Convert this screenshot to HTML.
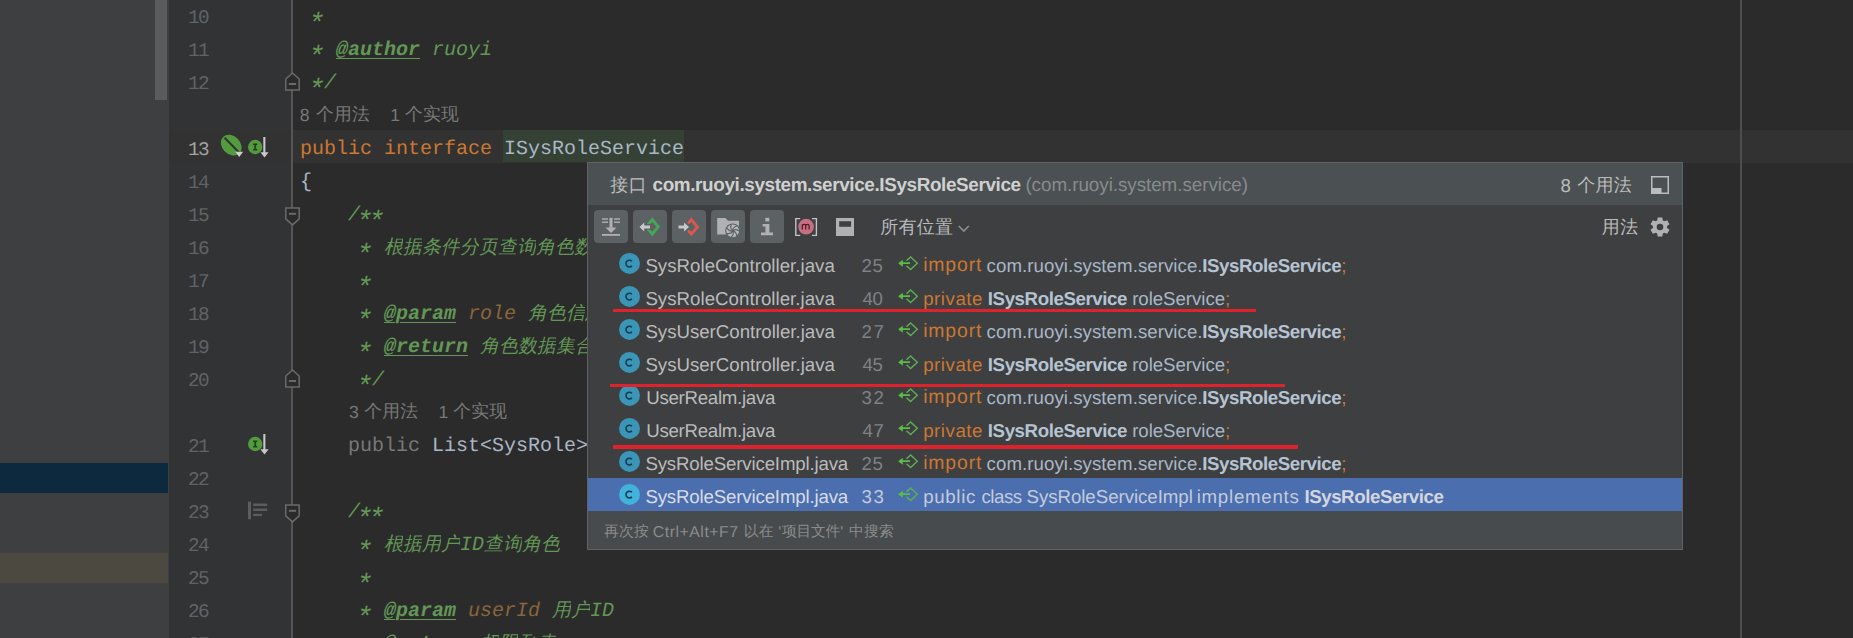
<!DOCTYPE html><html><head><meta charset="utf-8"><title>usages</title><style>
*{box-sizing:border-box}
html,body{margin:0;padding:0;background:#2b2b2b;}
body{width:1853px;height:638px;overflow:hidden;position:relative;font-family:"Liberation Sans", sans-serif;text-rendering:geometricPrecision;}
.abs{position:absolute}
#left{left:0;top:0;width:169px;height:638px;background:#3d3f41}
#thumb{left:155px;top:0;width:12px;height:100px;background:#595b5d}
#bar1{left:0;top:463px;width:168px;height:30px;background:#0d293e}
#bar2{left:0;top:553px;width:168px;height:30px;background:#4c4a40}
#gutter{left:169px;top:0;width:122px;height:638px;background:#313335}
#foldline{left:291px;top:0;width:2px;height:638px;background:#555555}
#curline{left:293px;top:130px;width:1560px;height:33px;background:#323232}
#curgut{left:169px;top:130px;width:122px;height:33px;background:#323232}
#margin{left:1740px;top:0;width:2px;height:638px;background:#4d4d4d}
#identbg{left:503px;top:130px;width:181px;height:32px;background:#344134}
.ln{position:absolute;left:188px;width:30px;text-align:left;font-family:"Liberation Mono", monospace;font-size:19.4px;letter-spacing:-1.7px;line-height:33px;height:33px;color:#606366;white-space:pre}
.ln.cur{color:#a4a3a3}
.code{position:absolute;left:300px;font-family:"Liberation Mono", monospace;font-size:20px;line-height:33px;height:33px;white-space:pre;color:#a9b7c6}
.doc{color:#629755;font-style:italic}
.tag{color:#629755;font-style:italic;font-weight:bold;text-decoration:underline;text-decoration-thickness:1px;text-underline-offset:3px}
.st{display:inline-block;width:12px;height:0;line-height:0;font-size:28px;text-indent:-4.2px;position:relative;top:9.6px;white-space:nowrap;overflow:visible;vertical-align:baseline}
.prm{color:#8a653b;font-style:italic}
.kw{color:#cc7832}
.dim{color:#787878}
.cjk{display:inline-block;overflow:hidden;vertical-align:top;height:33px;font-size:19px;white-space:nowrap}
.k{display:inline-block;text-align:center;font-style:inherit;overflow:hidden;vertical-align:top;height:33px}
.inlay{position:absolute;font-family:"Liberation Sans", sans-serif;font-size:17px;line-height:33px;height:33px;color:#787878;white-space:pre}
#popup{left:587px;top:162px;width:1096px;height:388px;background:#3d3f41;border:1px solid #606365;overflow:hidden}
#phead{left:0;top:0;width:1094px;height:42px;background:#4b5052}
#pfoot{left:0;top:348px;width:1094px;height:38px;background:#474b4d}
#psel{left:0;top:315px;width:1094px;height:33px;background:#4b6eaf}
.tb{position:absolute;top:47px;width:34px;height:33px;background:#5c6164;border-radius:4px}
.t{position:absolute;white-space:pre;line-height:33px;height:33px;font-size:18.7px}
.fn{color:#bbbbbb}
.num{color:#7e8285}
.cd{color:#a9b7c6}
.b{font-weight:bold}
.red{position:absolute;height:3px;background:#df232c}
svg{position:absolute;overflow:visible}
</style></head><body><div id="left" class="abs"></div><div id="thumb" class="abs"></div><div id="bar1" class="abs"></div><div id="bar2" class="abs"></div>
<div id="gutter" class="abs"></div><div id="curgut" class="abs"></div><div id="foldline" class="abs"></div>
<div id="curline" class="abs"></div><div id="identbg" class="abs"></div><div id="margin" class="abs"></div>
<div class="ln" style="top:2px">10</div>
<div class="ln" style="top:35px">11</div>
<div class="ln" style="top:68px">12</div>
<div class="ln cur" style="top:134px">13</div>
<div class="ln" style="top:167px">14</div>
<div class="ln" style="top:200px">15</div>
<div class="ln" style="top:233px">16</div>
<div class="ln" style="top:266px">17</div>
<div class="ln" style="top:299px">18</div>
<div class="ln" style="top:332px">19</div>
<div class="ln" style="top:365px">20</div>
<div class="ln" style="top:431px">21</div>
<div class="ln" style="top:464px">22</div>
<div class="ln" style="top:497px">23</div>
<div class="ln" style="top:530px">24</div>
<div class="ln" style="top:563px">25</div>
<div class="ln" style="top:596px">26</div>
<div class="ln" style="top:629px">27</div>
<div class="code" style="top:1px"><span class="doc"> <span class="st">*</span></span></div>
<div class="code" style="top:34px"><span class="doc"> <span class="st">*</span> </span><span class="tag">@author</span><span class="doc"> ruoyi</span></div>
<div class="code" style="top:67px"><span class="doc"> <span class="st">*</span>/</span></div>
<div class="code" style="top:133px"><span class="kw">public interface </span>ISysRoleService</div>
<div class="code" style="top:166px">{</div>
<div class="code" style="top:199px"><span class="doc">    /<span class="st">*</span><span class="st">*</span></span></div>
<div class="code" style="top:232px"><span class="doc">     <span class="st">*</span> <span class="cjk" style="width:228px"><i class="k" style="width:19px">根</i><i class="k" style="width:19px">据</i><i class="k" style="width:19px">条</i><i class="k" style="width:19px">件</i><i class="k" style="width:19px">分</i><i class="k" style="width:19px">页</i><i class="k" style="width:19px">查</i><i class="k" style="width:19px">询</i><i class="k" style="width:19px">角</i><i class="k" style="width:19px">色</i><i class="k" style="width:19px">数</i><i class="k" style="width:19px">据</i></span></span></div>
<div class="code" style="top:265px"><span class="doc">     <span class="st">*</span></span></div>
<div class="code" style="top:298px"><span class="doc">     <span class="st">*</span> </span><span class="tag">@param</span><span class="doc"> </span><span class="prm">role</span><span class="doc"> <span class="cjk" style="width:76px"><i class="k" style="width:19px">角</i><i class="k" style="width:19px">色</i><i class="k" style="width:19px">信</i><i class="k" style="width:19px">息</i></span></span></div>
<div class="code" style="top:331px"><span class="doc">     <span class="st">*</span> </span><span class="tag">@return</span><span class="doc"> <span class="cjk" style="width:152px"><i class="k" style="width:19px">角</i><i class="k" style="width:19px">色</i><i class="k" style="width:19px">数</i><i class="k" style="width:19px">据</i><i class="k" style="width:19px">集</i><i class="k" style="width:19px">合</i><i class="k" style="width:19px">信</i><i class="k" style="width:19px">息</i></span></span></div>
<div class="code" style="top:364px"><span class="doc">     <span class="st">*</span>/</span></div>
<div class="code" style="top:430px">    <span class="dim">public</span> List&lt;SysRole&gt; selectRoleList(SysRole role);</div>
<div class="code" style="top:496px"><span class="doc">    /<span class="st">*</span><span class="st">*</span></span></div>
<div class="code" style="top:529px"><span class="doc">     <span class="st">*</span> <span class="cjk" style="width:76px"><i class="k" style="width:19px">根</i><i class="k" style="width:19px">据</i><i class="k" style="width:19px">用</i><i class="k" style="width:19px">户</i></span>ID<span class="cjk" style="width:76px"><i class="k" style="width:19px">查</i><i class="k" style="width:19px">询</i><i class="k" style="width:19px">角</i><i class="k" style="width:19px">色</i></span></span></div>
<div class="code" style="top:562px"><span class="doc">     <span class="st">*</span></span></div>
<div class="code" style="top:595px"><span class="doc">     <span class="st">*</span> </span><span class="tag">@param</span><span class="doc"> </span><span class="prm">userId</span><span class="doc"> <span class="cjk" style="width:38px"><i class="k" style="width:19px">用</i><i class="k" style="width:19px">户</i></span>ID</span></div>
<div class="code" style="top:628px"><span class="doc">     <span class="st">*</span> </span><span class="tag">@return</span><span class="doc"> <span class="cjk" style="width:76px"><i class="k" style="width:19px">权</i><i class="k" style="width:19px">限</i><i class="k" style="width:19px">列</i><i class="k" style="width:19px">表</i></span></span></div>
<div class="t" style="left:299.80px;top:98.5px;font-size:17.6px;color:#787878;font-weight:normal;font-style:normal;letter-spacing:0.000px;">8</div>
<div class="inlay" style="left:316px;top:98px;width:54px;overflow:hidden;font-size:17.8px"><i class="k" style="width:18px">个</i><i class="k" style="width:18px">用</i><i class="k" style="width:18px">法</i></div>
<div class="t" style="left:390.20px;top:98.5px;font-size:17.6px;color:#787878;font-weight:normal;font-style:normal;letter-spacing:0.000px;">1</div>
<div class="inlay" style="left:405px;top:98px;width:54px;overflow:hidden;font-size:17.8px"><i class="k" style="width:18px">个</i><i class="k" style="width:18px">实</i><i class="k" style="width:18px">现</i></div>
<div class="t" style="left:349.00px;top:395.5px;font-size:17.6px;color:#787878;font-weight:normal;font-style:normal;letter-spacing:0.000px;">3</div>
<div class="inlay" style="left:364.2px;top:395px;width:54px;overflow:hidden;font-size:17.8px"><i class="k" style="width:18px">个</i><i class="k" style="width:18px">用</i><i class="k" style="width:18px">法</i></div>
<div class="t" style="left:438.40px;top:395.5px;font-size:17.6px;color:#787878;font-weight:normal;font-style:normal;letter-spacing:0.000px;">1</div>
<div class="inlay" style="left:453.2px;top:395px;width:54px;overflow:hidden;font-size:17.8px"><i class="k" style="width:18px">个</i><i class="k" style="width:18px">实</i><i class="k" style="width:18px">现</i></div>
<svg style="left:248px;top:132px" width="22" height="26" viewBox="0 0 22 26">
<circle cx="7.2" cy="15" r="7.2" fill="#549b40"/>
<path d="M5.1 11.6h4.2v1.4h-1.2v4h1.2v1.4h-4.2v-1.4h1.2v-4h-1.2z" fill="#24401c"/>
<rect x="15.3" y="5" width="2.1" height="16.5" fill="#c8c8c8"/>
<path d="M12.4 20.2h8.2l-4.1 5.3z" fill="#c8c8c8"/></svg>
<svg style="left:248px;top:429px" width="22" height="26" viewBox="0 0 22 26">
<circle cx="7.2" cy="15" r="7.2" fill="#549b40"/>
<path d="M5.1 11.6h4.2v1.4h-1.2v4h1.2v1.4h-4.2v-1.4h1.2v-4h-1.2z" fill="#24401c"/>
<rect x="15.3" y="5" width="2.1" height="16.5" fill="#c8c8c8"/>
<path d="M12.4 20.2h8.2l-4.1 5.3z" fill="#c8c8c8"/></svg>
<svg style="left:219px;top:133px" width="26" height="26" viewBox="0 0 26 26">
<ellipse cx="12.25" cy="12.15" rx="11.5" ry="9.1" transform="rotate(45 12.25 12.15)" fill="#549b40"/>
<path d="M5.6 4.7L20.3 19.7" stroke="#2e3630" stroke-width="2" fill="none"/>
<path d="M16.3 18.8h7.8l-3.9 5.3z" fill="#cfcfcf"/></svg>
<svg style="left:248px;top:501px" width="20" height="19" viewBox="0 0 20 19">
<rect x="0" y="0.6" width="3" height="17.6" fill="#5b5e61"/>
<rect x="5.2" y="2.5" width="14" height="2.5" fill="#5b5e61"/>
<rect x="5.2" y="7.5" width="14" height="2.5" fill="#5b5e61"/>
<rect x="5.2" y="12.8" width="8.8" height="2.3" fill="#5b5e61"/></svg>
<svg style="left:284px;top:72px" width="17" height="19" viewBox="0 0 17 19">
<path d="M1.8 17.9h13.4v-10.9l-6.7-6.1l-6.7 6.1z" fill="#2b2b2b" stroke="#6a6a6a" stroke-width="1.5"/>
<rect x="4.9" y="11" width="7.2" height="2" fill="#6a6a6a"/></svg>
<svg style="left:284px;top:207px" width="17" height="19" viewBox="0 0 17 19">
<path d="M1.8 0.9h13.4v10.9l-6.7 6.1l-6.7-6.1z" fill="#2b2b2b" stroke="#6a6a6a" stroke-width="1.5"/>
<rect x="4.9" y="5.8" width="7.2" height="2" fill="#6a6a6a"/></svg>
<svg style="left:284px;top:369px" width="17" height="19" viewBox="0 0 17 19">
<path d="M1.8 17.9h13.4v-10.9l-6.7-6.1l-6.7 6.1z" fill="#2b2b2b" stroke="#6a6a6a" stroke-width="1.5"/>
<rect x="4.9" y="11" width="7.2" height="2" fill="#6a6a6a"/></svg>
<svg style="left:284px;top:504px" width="17" height="19" viewBox="0 0 17 19">
<path d="M1.8 0.9h13.4v10.9l-6.7 6.1l-6.7-6.1z" fill="#2b2b2b" stroke="#6a6a6a" stroke-width="1.5"/>
<rect x="4.9" y="5.8" width="7.2" height="2" fill="#6a6a6a"/></svg>
<div id="popup" class="abs"><div id="phead" class="abs"></div><div id="psel" class="abs"></div><div id="pfoot" class="abs"></div><div class="t" style="left:22px;top:5.5px;width:37px;overflow:hidden;font-size:18px;color:#bbbbbb;"><i class="k" style="width:18.5px">接</i><i class="k" style="width:18.5px">口</i></div><div class="t" style="left:64.50px;top:5.5px;font-size:18.9px;color:#d0d0d0;font-weight:bold;font-style:normal;letter-spacing:-0.377px;">com.ruoyi.system.service.ISysRoleService</div><div class="t" style="left:437.40px;top:5.5px;font-size:18.9px;color:#878b8d;font-weight:normal;font-style:normal;letter-spacing:-0.080px;">(com.ruoyi.system.service)</div><div class="t" style="left:972.60px;top:5.5px;font-size:18.7px;color:#bbbbbb;font-weight:normal;font-style:normal;letter-spacing:0.000px;">8</div><div class="t" style="left:989px;top:5.5px;width:55px;overflow:hidden;font-size:18px;color:#bbbbbb;"><i class="k" style="width:18.33px">个</i><i class="k" style="width:18.33px">用</i><i class="k" style="width:18.33px">法</i></div><svg style="left:1063px;top:13px" width="18" height="18" viewBox="0 0 18 18">
<rect x="0.75" y="0.75" width="16.5" height="16.5" fill="none" stroke="#babdbf" stroke-width="1.5"/>
<rect x="0" y="12" width="10.5" height="6" fill="#babdbf"/></svg><div class="tb" style="left:6px"></div><div class="tb" style="left:45px"></div><div class="tb" style="left:84px"></div><div class="tb" style="left:123px"></div><div class="tb" style="left:162px"></div><svg style="left:14px;top:54px" width="18" height="19" viewBox="0 0 18 19">
<rect x="0" y="1.3" width="6" height="1.4" fill="#afb1b3"/><rect x="12" y="1.3" width="6" height="1.4" fill="#afb1b3"/>
<rect x="0" y="4.5" width="6" height="1.4" fill="#afb1b3"/><rect x="12" y="4.5" width="6" height="1.4" fill="#afb1b3"/>
<rect x="7.5" y="0.8" width="3" height="10" fill="#afb1b3"/>
<path d="M3.5 10.4h11l-5.5 5.6z" fill="#afb1b3"/>
<rect x="0" y="17" width="18" height="1.8" fill="#afb1b3"/></svg><svg style="left:51px;top:54px" width="22" height="20" viewBox="0 0 22 20">
<path d="M13.3 0.2L8 6.5V6.9H11.66L13.3 4.88L17.3 9.8L13.3 14.72L11.66 12.7H8V13.1L13.3 19.4L21.1 9.8Z" fill="#45a657"/>
<path d="M0.5 9.9L5.2 5.4V8.4H11V11.5H5.2V14.5Z" fill="#c6c8ca"/></svg><svg style="left:90px;top:54px" width="22" height="20" viewBox="0 0 22 20">
<path d="M13.3 0.5L9.5 4.9V6.8H11.77L13.3 5.03L17.5 9.9L13.3 14.77L11.77 13H9.5V14.9L13.3 19.3L21.4 9.9Z" fill="#dd574f"/>
<path d="M0.5 8.4H6V5.4L11 9.9L6 14.5V11.5H0.5Z" fill="#c6c8ca"/></svg><svg style="left:129px;top:54px" width="24" height="22" viewBox="0 0 24 22">
<path d="M0.2 1.1h8.2l2.6 2.7H22v13.7H0.2z" fill="#afb1b3"/>
<circle cx="15.7" cy="13.9" r="7.5" fill="#5c6164"/>
<circle cx="15.7" cy="13.9" r="6.3" fill="#b9bbbd"/>
<g stroke="#5c6164" stroke-width="1.2" fill="none"><path d="M15.7 13.9Q18.33 11.45 22.00 13.90"/><path d="M15.7 13.9Q19.26 14.43 19.63 18.83"/><path d="M15.7 13.9Q17.51 17.01 14.30 20.04"/><path d="M15.7 13.9Q14.39 17.25 10.02 16.63"/><path d="M15.7 13.9Q12.26 14.97 10.02 11.17"/><path d="M15.7 13.9Q12.72 11.88 14.30 7.76"/><path d="M15.7 13.9Q15.42 10.31 19.63 8.97"/></g>
<circle cx="15.7" cy="13.9" r="1.1" fill="#5c6164"/></svg><svg style="left:173px;top:54px" width="13" height="19" viewBox="0 0 13 19">
<rect x="4.3" y="0.8" width="4" height="3.6" fill="#afb1b3"/>
<path d="M1.6 7h6.8v8.6h3.6v2.6h-12v-2.6h4.4v-6h-2.8z" fill="#afb1b3"/></svg><svg style="left:207px;top:54px" width="23" height="20" viewBox="0 0 23 20">
<path d="M5.2 1.6H0.8v16.8h4.4M16.9 1.6h4.5v16.8h-4.5" fill="none" stroke="#c2c4c6" stroke-width="1.4"/>
<circle cx="11.1" cy="9.7" r="7.85" fill="#c66e82"/>
<path d="M7.3 12.4V7.4M7.3 8.9q0.2-1.6 1.8-1.6q1.6 0 1.6 1.7V12.4M10.7 9q0.2-1.7 1.8-1.7q1.6 0 1.6 1.7V12.4" fill="none" stroke="#4a1824" stroke-width="1.2"/></svg><svg style="left:248px;top:55px" width="18" height="18" viewBox="0 0 18 18">
<path d="M0 0h18v18h-18z M3.2 3.2v5.6h11.9v-5.6z" fill="#afb1b3" fill-rule="evenodd"/></svg><div class="t" style="left:292px;top:48.0px;width:73px;overflow:hidden;font-size:18px;color:#bbbbbb;"><i class="k" style="width:18.25px">所</i><i class="k" style="width:18.25px">有</i><i class="k" style="width:18.25px">位</i><i class="k" style="width:18.25px">置</i></div><svg style="left:370px;top:62px" width="12" height="8" viewBox="0 0 12 8">
<path d="M0.8 1l5 5l5-5" fill="none" stroke="#8a8e90" stroke-width="1.7"/></svg><div class="t" style="left:1013.5px;top:48.0px;width:37px;overflow:hidden;font-size:18px;color:#bbbbbb;"><i class="k" style="width:18.5px">用</i><i class="k" style="width:18.5px">法</i></div><svg style="left:1062px;top:54px" width="20" height="20" viewBox="0 0 20 20">
<path d="M7.24 3.46L7.65 0.38L12.35 0.38L12.76 3.46L14.28 4.34L17.15 3.15L19.50 7.23L17.05 9.12L17.05 10.88L19.50 12.77L17.15 16.85L14.28 15.66L12.76 16.54L12.35 19.62L7.65 19.62L7.24 16.54L5.72 15.66L2.85 16.85L0.50 12.77L2.95 10.88L2.95 9.12L0.50 7.23L2.85 3.15L5.72 4.34Z M6.70 10.00a3.3 3.3 0 1 0 6.6 0a3.3 3.3 0 1 0 -6.6 0Z" fill="#afb1b3" fill-rule="evenodd"/></svg><svg style="left:30.5px;top:90.19999999999999px" width="21" height="21" viewBox="0 0 21 21">
<circle cx="10.5" cy="10.4" r="10.5" fill="#3b95b6"/>
<path d="M12.9 8.3A3.4 3.4 0 1 0 12.9 12.9" fill="none" stroke="#153d52" stroke-width="1.6"/></svg><div class="t" style="left:57.40px;top:85.5px;font-size:18.7px;color:#bbbbbb;font-weight:normal;font-style:normal;letter-spacing:0.019px;">SysRoleController.java</div><div class="t" style="left:273.60px;top:85.5px;font-size:18.7px;color:#7e8285;font-weight:normal;font-style:normal;letter-spacing:0.600px;">25</div><svg style="left:310px;top:93.39999999999998px" width="20" height="15" viewBox="0 0 20 15">
<path d="M8.5 4.7L12.6 0.9L19.3 7.2L12.6 13.6L8.5 9.8" fill="none" stroke="#5fae54" stroke-width="1.4"/>
<path d="M0.1 7.2L4.8 3.8V6.3H12V8.1H4.8V10.7Z" fill="#5bbd47"/></svg><div class="t" style="left:335.20px;top:85.5px;font-size:19.4px;color:#cc7832;font-weight:normal;font-style:normal;letter-spacing:0.860px;">import</div><div class="t" style="left:398.60px;top:85.5px;font-size:18.7px;color:#a9b7c6;font-weight:normal;font-style:normal;letter-spacing:0.042px;">com.ruoyi.system.service.</div><div class="t" style="left:614.20px;top:85.5px;font-size:18.7px;color:#b6c3d2;font-weight:bold;font-style:normal;letter-spacing:-0.429px;">ISysRoleService</div><div class="t" style="left:753.20px;top:85.5px;font-size:18.7px;color:#cc7832;font-weight:normal;font-style:normal;letter-spacing:0.000px;">;</div><svg style="left:30.5px;top:123.19999999999999px" width="21" height="21" viewBox="0 0 21 21">
<circle cx="10.5" cy="10.4" r="10.5" fill="#3b95b6"/>
<path d="M12.9 8.3A3.4 3.4 0 1 0 12.9 12.9" fill="none" stroke="#153d52" stroke-width="1.6"/></svg><div class="t" style="left:57.40px;top:118.5px;font-size:18.7px;color:#bbbbbb;font-weight:normal;font-style:normal;letter-spacing:0.019px;">SysRoleController.java</div><div class="t" style="left:274.60px;top:118.5px;font-size:18.7px;color:#7e8285;font-weight:normal;font-style:normal;letter-spacing:-0.400px;">40</div><svg style="left:310px;top:126.39999999999998px" width="20" height="15" viewBox="0 0 20 15">
<path d="M8.5 4.7L12.6 0.9L19.3 7.2L12.6 13.6L8.5 9.8" fill="none" stroke="#5fae54" stroke-width="1.4"/>
<path d="M0.1 7.2L4.8 3.8V6.3H12V8.1H4.8V10.7Z" fill="#5bbd47"/></svg><div class="t" style="left:335.20px;top:118.5px;font-size:18.7px;color:#cc7832;font-weight:normal;font-style:normal;letter-spacing:0.533px;">private</div><div class="t" style="left:399.80px;top:118.5px;font-size:18.7px;color:#b6c3d2;font-weight:bold;font-style:normal;letter-spacing:-0.414px;">ISysRoleService</div><div class="t" style="left:544.20px;top:118.5px;font-size:18.7px;color:#a9b7c6;font-weight:normal;font-style:normal;letter-spacing:-0.060px;">roleService</div><div class="t" style="left:637.00px;top:118.5px;font-size:18.7px;color:#cc7832;font-weight:normal;font-style:normal;letter-spacing:0.000px;">;</div><svg style="left:30.5px;top:156.2px" width="21" height="21" viewBox="0 0 21 21">
<circle cx="10.5" cy="10.4" r="10.5" fill="#3b95b6"/>
<path d="M12.9 8.3A3.4 3.4 0 1 0 12.9 12.9" fill="none" stroke="#153d52" stroke-width="1.6"/></svg><div class="t" style="left:57.40px;top:151.5px;font-size:18.7px;color:#bbbbbb;font-weight:normal;font-style:normal;letter-spacing:-0.029px;">SysUserController.java</div><div class="t" style="left:273.60px;top:151.5px;font-size:18.7px;color:#7e8285;font-weight:normal;font-style:normal;letter-spacing:1.600px;">27</div><svg style="left:310px;top:159.39999999999998px" width="20" height="15" viewBox="0 0 20 15">
<path d="M8.5 4.7L12.6 0.9L19.3 7.2L12.6 13.6L8.5 9.8" fill="none" stroke="#5fae54" stroke-width="1.4"/>
<path d="M0.1 7.2L4.8 3.8V6.3H12V8.1H4.8V10.7Z" fill="#5bbd47"/></svg><div class="t" style="left:335.20px;top:151.5px;font-size:19.4px;color:#cc7832;font-weight:normal;font-style:normal;letter-spacing:0.860px;">import</div><div class="t" style="left:398.60px;top:151.5px;font-size:18.7px;color:#a9b7c6;font-weight:normal;font-style:normal;letter-spacing:0.042px;">com.ruoyi.system.service.</div><div class="t" style="left:614.20px;top:151.5px;font-size:18.7px;color:#b6c3d2;font-weight:bold;font-style:normal;letter-spacing:-0.429px;">ISysRoleService</div><div class="t" style="left:753.20px;top:151.5px;font-size:18.7px;color:#cc7832;font-weight:normal;font-style:normal;letter-spacing:0.000px;">;</div><svg style="left:30.5px;top:189.2px" width="21" height="21" viewBox="0 0 21 21">
<circle cx="10.5" cy="10.4" r="10.5" fill="#3b95b6"/>
<path d="M12.9 8.3A3.4 3.4 0 1 0 12.9 12.9" fill="none" stroke="#153d52" stroke-width="1.6"/></svg><div class="t" style="left:57.40px;top:184.5px;font-size:18.7px;color:#bbbbbb;font-weight:normal;font-style:normal;letter-spacing:-0.029px;">SysUserController.java</div><div class="t" style="left:274.60px;top:184.5px;font-size:18.7px;color:#7e8285;font-weight:normal;font-style:normal;letter-spacing:-0.400px;">45</div><svg style="left:310px;top:192.39999999999998px" width="20" height="15" viewBox="0 0 20 15">
<path d="M8.5 4.7L12.6 0.9L19.3 7.2L12.6 13.6L8.5 9.8" fill="none" stroke="#5fae54" stroke-width="1.4"/>
<path d="M0.1 7.2L4.8 3.8V6.3H12V8.1H4.8V10.7Z" fill="#5bbd47"/></svg><div class="t" style="left:335.20px;top:184.5px;font-size:18.7px;color:#cc7832;font-weight:normal;font-style:normal;letter-spacing:0.533px;">private</div><div class="t" style="left:399.80px;top:184.5px;font-size:18.7px;color:#b6c3d2;font-weight:bold;font-style:normal;letter-spacing:-0.414px;">ISysRoleService</div><div class="t" style="left:544.20px;top:184.5px;font-size:18.7px;color:#a9b7c6;font-weight:normal;font-style:normal;letter-spacing:-0.060px;">roleService</div><div class="t" style="left:637.00px;top:184.5px;font-size:18.7px;color:#cc7832;font-weight:normal;font-style:normal;letter-spacing:0.000px;">;</div><svg style="left:30.5px;top:222.2px" width="21" height="21" viewBox="0 0 21 21">
<circle cx="10.5" cy="10.4" r="10.5" fill="#3b95b6"/>
<path d="M12.9 8.3A3.4 3.4 0 1 0 12.9 12.9" fill="none" stroke="#153d52" stroke-width="1.6"/></svg><div class="t" style="left:58.20px;top:217.5px;font-size:18.7px;color:#bbbbbb;font-weight:normal;font-style:normal;letter-spacing:-0.285px;">UserRealm.java</div><div class="t" style="left:273.60px;top:217.5px;font-size:18.7px;color:#7e8285;font-weight:normal;font-style:normal;letter-spacing:1.600px;">32</div><svg style="left:310px;top:225.39999999999998px" width="20" height="15" viewBox="0 0 20 15">
<path d="M8.5 4.7L12.6 0.9L19.3 7.2L12.6 13.6L8.5 9.8" fill="none" stroke="#5fae54" stroke-width="1.4"/>
<path d="M0.1 7.2L4.8 3.8V6.3H12V8.1H4.8V10.7Z" fill="#5bbd47"/></svg><div class="t" style="left:335.20px;top:217.5px;font-size:19.4px;color:#cc7832;font-weight:normal;font-style:normal;letter-spacing:0.860px;">import</div><div class="t" style="left:398.60px;top:217.5px;font-size:18.7px;color:#a9b7c6;font-weight:normal;font-style:normal;letter-spacing:0.042px;">com.ruoyi.system.service.</div><div class="t" style="left:614.20px;top:217.5px;font-size:18.7px;color:#b6c3d2;font-weight:bold;font-style:normal;letter-spacing:-0.429px;">ISysRoleService</div><div class="t" style="left:753.20px;top:217.5px;font-size:18.7px;color:#cc7832;font-weight:normal;font-style:normal;letter-spacing:0.000px;">;</div><svg style="left:30.5px;top:255.2px" width="21" height="21" viewBox="0 0 21 21">
<circle cx="10.5" cy="10.4" r="10.5" fill="#3b95b6"/>
<path d="M12.9 8.3A3.4 3.4 0 1 0 12.9 12.9" fill="none" stroke="#153d52" stroke-width="1.6"/></svg><div class="t" style="left:58.20px;top:250.5px;font-size:18.7px;color:#bbbbbb;font-weight:normal;font-style:normal;letter-spacing:-0.285px;">UserRealm.java</div><div class="t" style="left:274.60px;top:250.5px;font-size:18.7px;color:#7e8285;font-weight:normal;font-style:normal;letter-spacing:0.600px;">47</div><svg style="left:310px;top:258.4px" width="20" height="15" viewBox="0 0 20 15">
<path d="M8.5 4.7L12.6 0.9L19.3 7.2L12.6 13.6L8.5 9.8" fill="none" stroke="#5fae54" stroke-width="1.4"/>
<path d="M0.1 7.2L4.8 3.8V6.3H12V8.1H4.8V10.7Z" fill="#5bbd47"/></svg><div class="t" style="left:335.20px;top:250.5px;font-size:18.7px;color:#cc7832;font-weight:normal;font-style:normal;letter-spacing:0.533px;">private</div><div class="t" style="left:399.80px;top:250.5px;font-size:18.7px;color:#b6c3d2;font-weight:bold;font-style:normal;letter-spacing:-0.414px;">ISysRoleService</div><div class="t" style="left:544.20px;top:250.5px;font-size:18.7px;color:#a9b7c6;font-weight:normal;font-style:normal;letter-spacing:-0.060px;">roleService</div><div class="t" style="left:637.00px;top:250.5px;font-size:18.7px;color:#cc7832;font-weight:normal;font-style:normal;letter-spacing:0.000px;">;</div><svg style="left:30.5px;top:288.2px" width="21" height="21" viewBox="0 0 21 21">
<circle cx="10.5" cy="10.4" r="10.5" fill="#3b95b6"/>
<path d="M12.9 8.3A3.4 3.4 0 1 0 12.9 12.9" fill="none" stroke="#153d52" stroke-width="1.6"/></svg><div class="t" style="left:57.40px;top:283.5px;font-size:18.7px;color:#bbbbbb;font-weight:normal;font-style:normal;letter-spacing:-0.173px;">SysRoleServiceImpl.java</div><div class="t" style="left:273.60px;top:283.5px;font-size:18.7px;color:#7e8285;font-weight:normal;font-style:normal;letter-spacing:0.600px;">25</div><svg style="left:310px;top:291.4px" width="20" height="15" viewBox="0 0 20 15">
<path d="M8.5 4.7L12.6 0.9L19.3 7.2L12.6 13.6L8.5 9.8" fill="none" stroke="#5fae54" stroke-width="1.4"/>
<path d="M0.1 7.2L4.8 3.8V6.3H12V8.1H4.8V10.7Z" fill="#5bbd47"/></svg><div class="t" style="left:335.20px;top:283.5px;font-size:19.4px;color:#cc7832;font-weight:normal;font-style:normal;letter-spacing:0.860px;">import</div><div class="t" style="left:398.60px;top:283.5px;font-size:18.7px;color:#a9b7c6;font-weight:normal;font-style:normal;letter-spacing:0.042px;">com.ruoyi.system.service.</div><div class="t" style="left:614.20px;top:283.5px;font-size:18.7px;color:#b6c3d2;font-weight:bold;font-style:normal;letter-spacing:-0.429px;">ISysRoleService</div><div class="t" style="left:753.20px;top:283.5px;font-size:18.7px;color:#cc7832;font-weight:normal;font-style:normal;letter-spacing:0.000px;">;</div><svg style="left:30.5px;top:321.2px" width="21" height="21" viewBox="0 0 21 21">
<circle cx="10.5" cy="10.4" r="10.5" fill="#40b2dc"/>
<path d="M12.9 8.3A3.4 3.4 0 1 0 12.9 12.9" fill="none" stroke="#153d52" stroke-width="1.6"/></svg><div class="t" style="left:57.40px;top:316.5px;font-size:18.7px;color:#d8dce6;font-weight:normal;font-style:normal;letter-spacing:-0.173px;">SysRoleServiceImpl.java</div><div class="t" style="left:273.60px;top:316.5px;font-size:18.7px;color:#c3cbdc;font-weight:normal;font-style:normal;letter-spacing:1.600px;">33</div><svg style="left:310px;top:324.4px" width="20" height="15" viewBox="0 0 20 15">
<path d="M8.5 4.7L12.6 0.9L19.3 7.2L12.6 13.6L8.5 9.8" fill="none" stroke="#5fae54" stroke-width="1.4"/>
<path d="M0.1 7.2L4.8 3.8V6.3H12V8.1H4.8V10.7Z" fill="#5bbd47"/></svg><div class="t" style="left:335.20px;top:316.5px;font-size:18.7px;color:#c3cbdc;font-weight:normal;font-style:normal;letter-spacing:0.660px;">public</div><div class="t" style="left:393.50px;top:316.5px;font-size:18.7px;color:#c3cbdc;font-weight:normal;font-style:normal;letter-spacing:-0.500px;">class</div><div class="t" style="left:438.50px;top:316.5px;font-size:18.7px;color:#c3cbdc;font-weight:normal;font-style:normal;letter-spacing:-0.053px;">SysRoleServiceImpl</div><div class="t" style="left:608.70px;top:316.5px;font-size:18.7px;color:#c3cbdc;font-weight:normal;font-style:normal;letter-spacing:0.733px;">implements</div><div class="t" style="left:716.40px;top:316.5px;font-size:18.7px;color:#d3d6dd;font-weight:bold;font-style:normal;letter-spacing:-0.429px;">ISysRoleService</div><div class="red" style="left:25.399999999999977px;top:145.8px;width:642.1999999999999px;height:3.5px"></div><div class="red" style="left:22px;top:220.60000000000002px;width:675px;height:3.5px"></div><div class="red" style="left:25.200000000000045px;top:282.1px;width:684.5999999999999px;height:3.7px"></div><div class="t" style="left:16px;top:352.5px;width:45px;overflow:hidden;font-size:14.8px;color:#8c8c8c;"><i class="k" style="width:15.0px">再</i><i class="k" style="width:15.0px">次</i><i class="k" style="width:15.0px">按</i></div><div class="t" style="left:64.80px;top:352.5px;font-size:15.8px;color:#8c8c8c;font-weight:normal;font-style:normal;letter-spacing:0.540px;">Ctrl+Alt+F7</div><div class="t" style="left:155.60000000000002px;top:352.5px;width:30px;overflow:hidden;font-size:14.8px;color:#8c8c8c;"><i class="k" style="width:15.0px">以</i><i class="k" style="width:15.0px">在</i></div><div class="t" style="left:190.20px;top:352.5px;font-size:15.8px;color:#8c8c8c;font-weight:normal;font-style:normal;letter-spacing:0.000px;">&#x27;</div><div class="t" style="left:194px;top:352.5px;width:58px;overflow:hidden;font-size:14.8px;color:#8c8c8c;"><i class="k" style="width:14.5px">项</i><i class="k" style="width:14.5px">目</i><i class="k" style="width:14.5px">文</i><i class="k" style="width:14.5px">件</i></div><div class="t" style="left:252.20px;top:352.5px;font-size:15.8px;color:#8c8c8c;font-weight:normal;font-style:normal;letter-spacing:0.000px;">&#x27;</div><div class="t" style="left:261px;top:352.5px;width:45px;overflow:hidden;font-size:14.8px;color:#8c8c8c;"><i class="k" style="width:15.0px">中</i><i class="k" style="width:15.0px">搜</i><i class="k" style="width:15.0px">索</i></div></div></body></html>
